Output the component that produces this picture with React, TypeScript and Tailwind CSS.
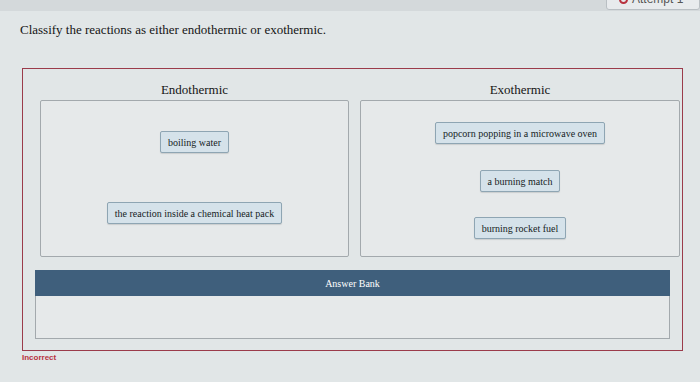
import React from "react";

const serif = { fontFamily: '"Liberation Serif", "Times New Roman", serif' };

function Card({ text, className = "" }: { text: string; className?: string }) {
  return (
    <div
      className={`h-[22px] px-[7px] flex items-center rounded-[2px] border border-[#8ea5b3] bg-[#d5e2ea] text-[10px] text-[#151d24] shadow-[0_1px_1px_rgba(0,0,0,0.12)] ${className}`}
      style={serif}
    >
      {text}
    </div>
  );
}

export default function App() {
  return (
    <div className="w-[700px] h-[382px] overflow-hidden bg-[#e1e6e7] flex flex-col" style={serif}>
      <div className="h-[11px] bg-[#d4d9db] flex justify-end shrink-0">
        <div className="-mt-[12px] w-[94px] h-[22px] rounded-[3px] border border-[#b9bfc3] bg-[#e8ebed] flex items-center gap-1 pl-[12px] text-[12px] text-[#555]" style={{ fontFamily: '"Liberation Sans", Arial, sans-serif' }}>
          <span className="w-[9px] h-[9px] rounded-full border-2 border-[#b8323f]" />
          <span>Attempt 1</span>
        </div>
      </div>
      <div className="pl-[20px] pt-[11px] text-[13px] text-[#151515] leading-[16px]">
        Classify the reactions as either endothermic or exothermic.
      </div>
      <div className="ml-[22px] mt-[30px] w-[661px] h-[283px] border-[1.5px] border-[#9b3b4b] flex flex-col">
        <div className="grid grid-cols-[309px_320px] gap-[11px] pl-[17px] pt-[13px]">
          <div className="flex flex-col">
            <div className="text-center text-[13px] leading-[16px] text-[#151515]">Endothermic</div>
            <div className="mt-[2px] h-[157px] border border-[#a3a9ad] rounded-[2px] bg-[#e6e9ea] flex flex-col items-center pt-[30px]">
              <Card text="boiling water" />
              <Card text="the reaction inside a chemical heat pack" className="mt-[49px]" />
            </div>
          </div>
          <div className="flex flex-col">
            <div className="text-center text-[13px] leading-[16px] text-[#151515]">Exothermic</div>
            <div className="mt-[2px] h-[157px] border border-[#a3a9ad] rounded-[2px] bg-[#e6e9ea] flex flex-col items-center pt-[21px]">
              <Card text="popcorn popping in a microwave oven" />
              <Card text="a burning match" className="mt-[26px]" />
              <Card text="burning rocket fuel" className="mt-[25px]" />
            </div>
          </div>
        </div>
        <div className="ml-[12px] mt-[13px] w-[635px] flex flex-col">
          <div className="h-[26px] bg-[#3f5f7c] flex items-center justify-center text-[10px] text-white">
            Answer Bank
          </div>
          <div className="h-[43px] bg-[#e6e9ea] border border-t-0 border-[#a3a9ad]" />
        </div>
      </div>
      <div
        className="pl-[22px] pt-[1px] text-[8px] font-bold text-[#b8323f]"
        style={{ fontFamily: '"Liberation Sans", Arial, sans-serif' }}
      >
        Incorrect
      </div>
    </div>
  );
}
